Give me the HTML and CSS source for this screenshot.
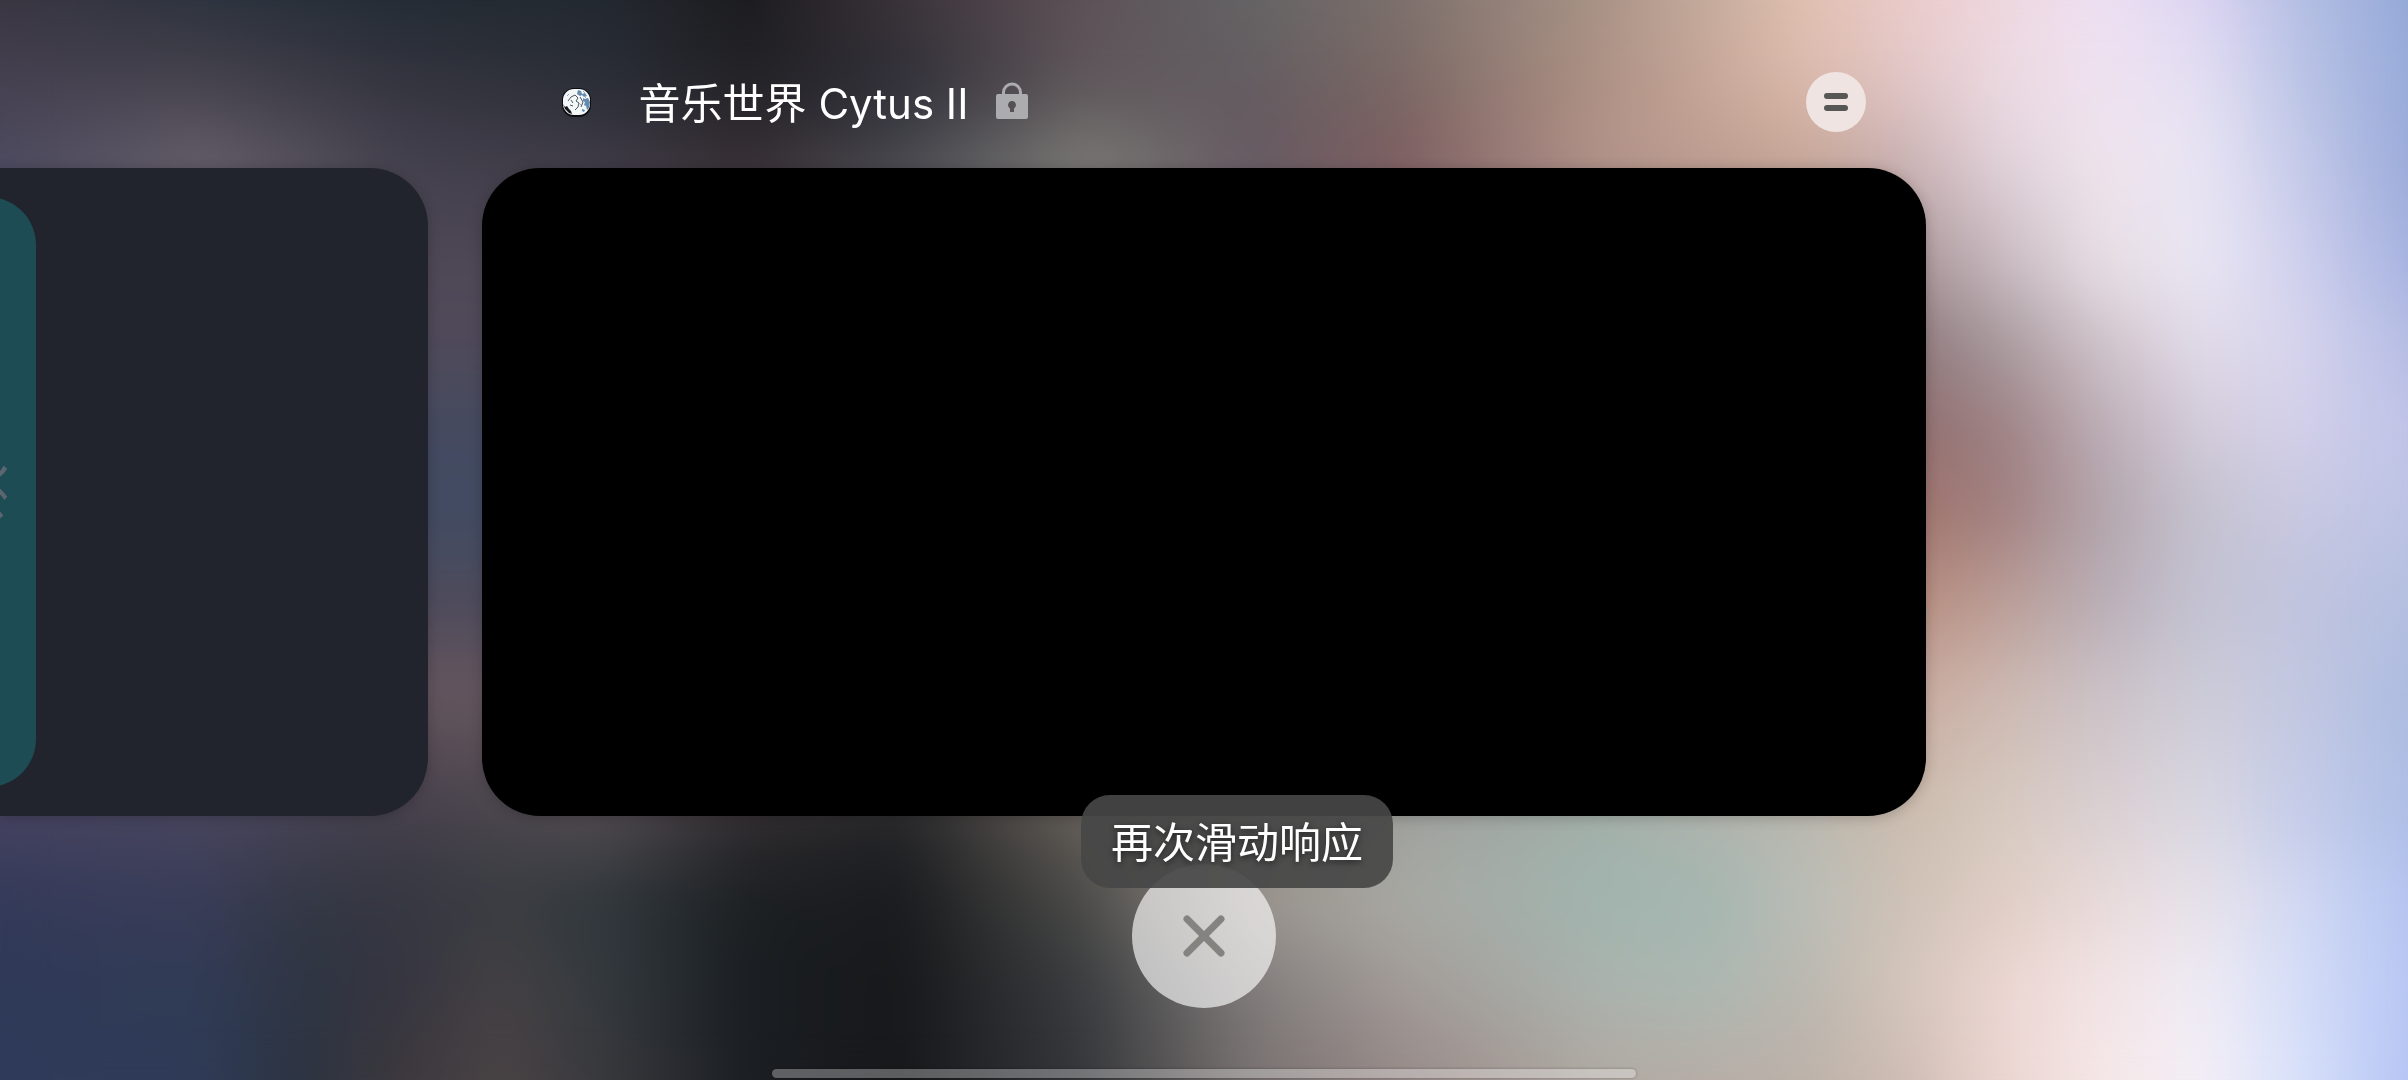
FILE: index.html
```html
<!DOCTYPE html>
<html lang="zh-CN">
<head>
<meta charset="utf-8">
<meta name="viewport" content="width=device-width, initial-scale=1">
<title>最近任务</title>
<link rel="stylesheet" href="styles.css">
</head>
<body>
<div class="wallpaper" aria-hidden="true">
  <div class="band band-1"></div>
  <div class="band band-2"></div>
  <div class="band band-3"></div>
  <div class="band band-4"></div>
  <div class="band band-5"></div>
  <div class="band band-6"></div>
  <div class="band band-7"></div>
  <div class="band band-8"></div>
  <div class="band band-9"></div>
  <div class="band band-10"></div>
  <div class="band band-11"></div>
  <div class="band band-12"></div>
  <div class="band band-13"></div>
  <div class="soften"></div>
</div>
<main class="recents">
  <header class="task-header">
    <svg class="app-icon" viewBox="0 0 29 29" aria-hidden="true">
      <rect width="29" height="29" rx="12" fill="#0b0d11"/>
      <rect x="1" y="1" width="27" height="26" rx="11" fill="#f4f7f8"/>
      <path d="M1 16l2 3 2-1 2 3 2 2 1 3-3-1-4-4z" fill="#14181d"/>
      <path d="M16 2l3 1 1 3 3-1 2 3-3 1-2-2-2 1-3-2zM21 10l2 1 3-1 2 4-1 6-2 2-1-4-2-1 1-3-2-1zM20 21l3 1-1 2-2-1z" fill="#6689ae"/>
      <path d="M6 13l3-4 4-2 3 3-2 3 3 2-1 4-3 3M9 12l2 3M8 17l3 1M18 9l3 5-2 5" fill="none" stroke="#4b5661"/>
      <path d="M21 3l2 2M23 9l2 2M17 15l2 2M5 8l2-2" stroke="#8eabc8" fill="none"/>
    </svg>
    <h1 class="task-title">音乐世界 Cytus II</h1>
    <svg class="lock" viewBox="0 0 32 37" aria-label="已锁定" role="img">
      <path d="M7.500 13V10.500a8.500 8.500 0 0 1 17 0V13" fill="none" stroke="#acabad" stroke-width="3"/>
      <path fill-rule="evenodd" fill="#acabad" d="M2 12h28a2 2 0 0 1 2 2v21a2 2 0 0 1-2 2H2a2 2 0 0 1-2-2V14a2 2 0 0 1 2-2zM16 19a4 4 0 0 0-2 7.400V30h4v-3.600A4 4 0 0 0 16 19z"/>
    </svg>
    <button class="menu-button" type="button" aria-label="菜单">
      <svg viewBox="0 0 24 18" width="24" height="18" aria-hidden="true"><rect width="24" height="6" rx="3"/><rect y="12" width="24" height="6" rx="3"/></svg>
    </button>
  </header>
  <section class="track">
    <article class="card card-previous"><div class="panel"><span class="panel-text">欢</span></div></article>
    <article class="card card-current" aria-label="音乐世界 Cytus II"></article>
  </section>
  <footer class="actions">
    <button class="clear-button" type="button" aria-label="全部清除">
      <svg viewBox="0 0 42 42" width="42" height="42" aria-hidden="true"><path d="M4 4L38 38M38 4L4 38"/></svg>
    </button>
    <div class="toast" role="status">再次滑动响应</div>
    <div class="home-bar"></div>
  </footer>
</main>
</body>
</html>
```

FILE: styles.css
```css
* { box-sizing: border-box; }

body {
  margin: 0;
  min-height: 100vh;
  overflow: hidden;
  background: #24262c;
  font-family: Inter, "Noto Sans CJK SC", sans-serif;
  color: #fff;
}

button { padding: 0; border: 0; display: grid; place-items: center; border-radius: 50%; }

/* Wallpaper: horizontal colour bands, each fading in over the one above */
.wallpaper { position: fixed; inset: 0; z-index: -1; overflow: hidden; }
.band { position: absolute; inset: 0; }
.soften { position: absolute; inset: 0; backdrop-filter: blur(24px); }

.band-1 { background: linear-gradient(90deg, #3a3642 0%, #2c333e 8.3%, #242c35 16.6%, #232930 24.9%, #1c1c1f 31.1%, #3c343a 37.4%, #5d5257 44.9%, #646465 51.9%, #7d716d 58.1%, #a89386 66.4%, #dfc1b1 74.8%, #ebcbc9 78.9%, #eed7de 83.1%, #eee0f2 87.2%, #dcd5f2 91.4%, #b5bfe4 95.5%, #94a9d8 100%); }
.band-2 {
  background: linear-gradient(90deg, #474252 0%, #48444f 8.3%, #353540 16.6%, #2c2f38 24.9%, #232227 31.1%, #2f2f38 37.4%, #5f575b 44.9%, #645c61 51.9%, #7a6764 58.1%, #ae9184 66.4%, #dab8aa 74.8%, #dfc4c4 78.9%, #ebd9e1 83.1%, #efe2f0 87.2%, #e5e0f3 91.4%, #bcc5e6 95.5%, #97aad9 100%);
  mask-image: linear-gradient(transparent 0%, #000 7.9%);
}
.band-3 {
  background: linear-gradient(90deg, #4c4a60 0%, #66606b 8.3%, #45424f 16.6%, #3f3b47 24.9%, #362e32 31.1%, #4a4a51 37.4%, #7b7b76 44.9%, #655a62 51.9%, #7d5d60 58.1%, #b3938a 66.4%, #c6a696 74.8%, #c8b0b0 78.9%, #e0d1d9 83.1%, #efe4ec 87.2%, #e9e5f4 91.4%, #c6cbea 95.5%, #9aaad9 100%);
  mask-image: linear-gradient(transparent 7.9%, #000 15.3%);
}
.band-4 {
  background: linear-gradient(90deg, #4f4857 0%, #4f4857 22%, #a18d90 78.9%, #c5b7bd 83.1%, #e6dde3 87.2%, #eae6f3 91.4%, #d1d1ee 95.5%, #a6b3e0 100%);
  mask-image: linear-gradient(transparent 15.3%, #000 25%);
}
.band-5 {
  background: linear-gradient(90deg, #504a5a 0%, #504a5a 22%, #8c7578 78.9%, #a79a9e 83.1%, #d0c3ca 87.2%, #e2dcea 91.4%, #d7d5ee 95.5%, #b4bce3 100%);
  mask-image: linear-gradient(transparent 25%, #000 31.5%);
}
.band-6 {
  background: linear-gradient(90deg, #454a60 0%, #454a60 22%, #8f6c6d 78.9%, #9d8082 83.1%, #bbacb4 87.2%, #d3ccda 91.4%, #d3d0ea 95.5%, #bfc3e7 100%);
  mask-image: linear-gradient(transparent 31.5%, #000 39.8%);
}
.band-7 {
  background: linear-gradient(90deg, #424c63 0%, #424c63 22%, #a0736a 78.9%, #a17f7f 83.1%, #b2a4aa 87.2%, #c5c2cf 91.4%, #c9c9e2 95.5%, #bcc3e5 100%);
  mask-image: linear-gradient(transparent 39.8%, #000 47.2%);
}
.band-8 {
  background: linear-gradient(90deg, #4d4a5b 0%, #4d4a5b 22%, #b68b7c 78.9%, #bb9d96 83.1%, #b9adb5 87.2%, #c4c3d3 91.4%, #c1c4de 95.5%, #b4bfe0 100%);
  mask-image: linear-gradient(transparent 47.2%, #000 55.6%);
}
.band-9 {
  background: linear-gradient(90deg, #65565f 0%, #65565f 22%, #c9a99e 78.9%, #cdb8b0 83.1%, #cbc1c6 87.2%, #cccbd7 91.4%, #c3c8e1 95.5%, #acbbe0 100%);
  mask-image: linear-gradient(transparent 55.6%, #000 63.9%);
}
.band-10 {
  background: linear-gradient(90deg, #444261 0%, #46455e 8.3%, #443f4a 16.6%, #504b50 24.9%, #2f2b2e 31.1%, #242528 37.4%, #655f58 44.9%, #8a857f 51.9%, #9fa19d 58.1%, #a2b0aa 66.4%, #b8b8b0 74.8%, #cbbcae 78.9%, #d7cac0 83.1%, #dbd0d2 87.2%, #dad8e2 91.4%, #c6cdea 95.5%, #aebee6 100%);
  mask-image: linear-gradient(transparent 63.9%, #000 75.5%);
}
.band-11 {
  background: linear-gradient(90deg, #343b59 0%, #3a3c58 8.3%, #343845 12.5%, #353741 16.6%, #3a3d42 20.8%, #31383d 24.9%, #1c2023 31.1%, #1a1b1e 37.4%, #4a4a48 44.9%, #9c958f 51.9%, #a9a9a3 58.1%, #a1b4af 66.4%, #a5b6b1 71%, #b9bdb6 74.8%, #cdc1b6 78.9%, #e0cdc4 83.1%, #e8dad9 87.2%, #e7e2ea 91.4%, #d2d9f3 95.5%, #b4c4f0 100%);
  mask-image: linear-gradient(transparent 75.5%, #000 83.3%);
}
.band-12 {
  background: linear-gradient(90deg, #2f3a59 0%, #303b55 8.3%, #2e3543 12.5%, #363540 16.6%, #454144 20.8%, #343a3f 24.9%, #1a1e22 31.1%, #17181a 37.4%, #393b3e 44.9%, #7f7b7a 51.9%, #a29a97 58.1%, #abb3ad 66.4%, #adb8b2 71%, #b9b7af 74.8%, #d3c4b9 78.9%, #ecd6d2 83.1%, #f3e4e5 87.2%, #efecf5 91.4%, #d5def8 95.5%, #b6c5f3 100%);
  mask-image: linear-gradient(transparent 83.3%, #000 91.7%);
}
.band-13 {
  background: linear-gradient(90deg, #303b5c 0%, #2f3b57 8.3%, #2d3442 12.5%, #3d393d 16.6%, #4a4345 20.8%, #3a3a3e 24.9%, #1b1f24 31.1%, #18191b 37.4%, #35373a 44.9%, #77706f 51.9%, #958886 58.1%, #b1a8a2 66.4%, #bcb1a9 74.8%, #cdbbb2 78.9%, #ead5d0 83.1%, #f5e6e6 87.2%, #f3eef6 91.4%, #d8e1fa 95.5%, #b5c4f3 100%);
  mask-image: linear-gradient(transparent 91.7%, #000 100%);
}

.recents { display: flex; flex-direction: column; min-height: 100vh; }

.task-header {
  display: flex;
  align-items: center;
  width: 60%;
  height: 168px;
  margin: 0 auto;
  padding: 36px 60px 0 80px;
}
.app-icon { width: 29px; height: 29px; margin-right: 48px; }
.task-title { margin: 0; padding-top: 4px; font-size: 42px; line-height: 60px; font-weight: 400; white-space: nowrap; }
.lock { width: 32px; height: 37px; margin: 0 auto 4px 28px; }
.menu-button { width: 60px; height: 60px; background: #efe4e1; }
.menu-button svg { fill: #575756; }

.track { display: grid; grid-template-columns: 20% 60%; }
.card { box-shadow: 0 2px 14px rgba(0, 0, 0, .2); }
.card-current { aspect-ratio: 1445 / 648; border-radius: 58px; background: #000; }
.card-previous {
  display: flex;
  margin-right: 54px;
  padding: 29px 0;
  border-radius: 0 58px 58px 0;
  background: #21242d;
}
.panel {
  display: flex;
  align-items: center;
  justify-content: flex-end;
  width: 120px;
  margin-left: -84px;
  padding-right: 24px;
  border-radius: 48px;
  background: #1e4c54;
}
/* The previous task was used in portrait, so its label lies on its side */
.panel-text { width: 60px; text-align: center; transform: rotate(-90deg); font-size: 56px; line-height: 60px; color: #5b6670; }

.actions {
  position: relative;
  display: flex;
  flex: 1;
  flex-direction: column;
  align-items: center;
  justify-content: space-between;
  padding: 48px 0 2px;
}
.clear-button { width: 144px; height: 144px; background: rgba(255, 255, 255, .64); }
.clear-button svg { fill: none; stroke: #85837f; stroke-width: 7; stroke-linecap: round; }
.toast {
  position: absolute;
  top: -21px;
  left: 50%;
  margin-left: -123px;
  padding: 18px 30px 15px;
  border-radius: 29px;
  background: rgba(70, 70, 70, .92);
  font-size: 42px;
  line-height: 60px;
  white-space: nowrap;
  text-shadow: 0 2px 6px rgba(0, 0, 0, .6);
}
.home-bar { width: 864px; max-width: 80%; height: 9px; border-radius: 5px; background: rgba(255, 255, 255, .3); box-shadow: 0 0 3px rgba(0, 0, 0, .3); }
```
